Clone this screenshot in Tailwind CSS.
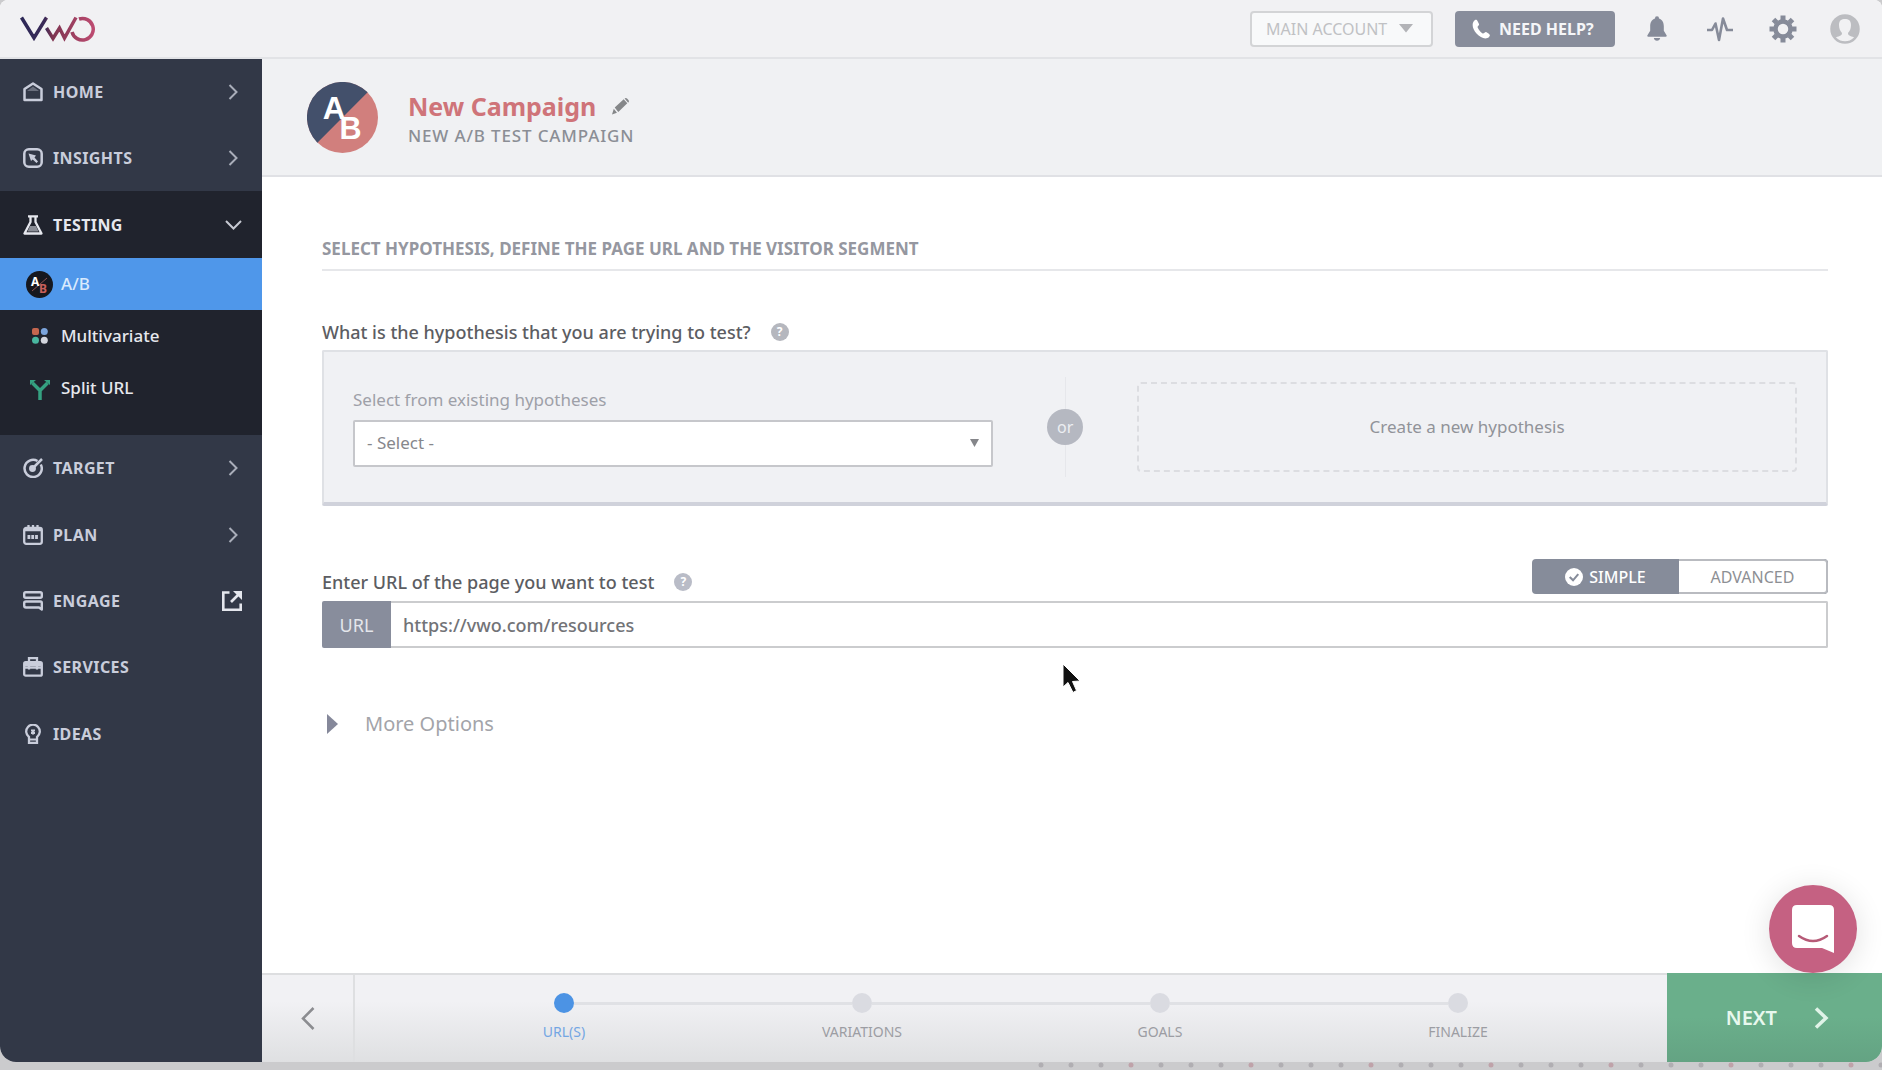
<!DOCTYPE html>
<html lang="en">
<head>
<meta charset="utf-8">
<meta name="viewport" content="width=device-width, initial-scale=1">
<title>New Campaign - VWO</title>
<script src="https://cdn.jsdelivr.net/npm/@tailwindcss/browser@4"></script>
</head>
<body class="flex min-h-screen flex-col bg-[#cbcbcd] font-['Noto_Sans',sans-serif] text-base text-[#5c5d62]">
<div class="flex grow flex-col overflow-hidden rounded-t-lg rounded-b-2xl bg-white">

  <header class="flex h-[59px] shrink-0 items-center border-b-2 border-[#e2e3e6] bg-[#f1f1f3] pr-3 pl-5">
    <a href="#" aria-label="VWO" class="mr-auto">
      <svg width="76" height="26" viewBox="0 0 76 26" fill="none" stroke-width="3.500">
        <defs>
          <linearGradient id="brand" gradientUnits="userSpaceOnUse" x1="0" y1="0" x2="76" y2="0"><stop offset="0" stop-color="#2b2856"/><stop offset=".33" stop-color="#3a2a58"/><stop offset=".42" stop-color="#7d3450"/><stop offset="1" stop-color="#c04c72"/></linearGradient>
        </defs>
        <path d="M1.500 1.500L14 22L26.500 1.500M26.500 12L33 22.500L39.500 12L44.500 22L56 1.500M59 3A10.800 10.800 0 1 1 52 16" stroke="url(#brand)"/>
      </svg>
    </a>
    <button class="flex h-9 w-[183px] items-center rounded-sm border-2 border-[#d3d4d6] bg-[#f8f9fa] pl-[14px] text-base text-[#c0c1c4]">MAIN ACCOUNT
      <svg class="ml-3" width="14" height="9" viewBox="0 0 14 9" fill="#b2b3b7"><path d="M0 0H14L7 8.500Z"/></svg>
    </button>
    <button class="ml-[22px] flex h-9 w-[160px] items-center rounded-sm bg-[#888d9b] pl-[17px] text-base font-bold text-[#f5f6f8]">
      <svg class="mr-2" width="19" height="20" viewBox="0 0 19 20" fill="#fff"><path d="M3 1C-1 4 .5 10 4.500 14.500C8.500 19 14 21 17 18C18.500 16.500 18 15.500 16.500 14.500L14.500 13.200C13 12.500 12.500 14.500 11 14.500C9 14 6 10 5.500 8C5.500 7 7.500 6.500 7 5L5.500 2C5 .8 4 .3 3 1Z"/></svg>NEED HELP?
    </button>
    <button aria-label="Notifications" class="ml-8">
      <svg width="20" height="28" viewBox="0 0 22 28" fill="#868b99"><path d="M11 0a2.200 2.200 0 0 1 2.200 2.400C17 3.500 18.500 7 18.500 11v5l3 5c.5 1 .2 1.600-1 1.600h-19C.3 22.600 0 22 .5 21l3-5v-5c0-4 1.500-7.500 5.300-8.600A2.200 2.200 0 0 1 11 0ZM7.500 24h7c-.5 2-1.500 3-3.500 3s-3-1-3.500-3Z"/></svg>
    </button>
    <button aria-label="Activity" class="ml-10">
      <svg width="26" height="26" viewBox="0 0 26 26" fill="none" stroke="#868b99" stroke-width="2.600" stroke-linejoin="round"><path d="M0 14H5L8.500 7.500L12 24L16 2.500L20 14H26"/></svg>
    </button>
    <button aria-label="Settings" class="ml-9">
      <svg width="28" height="28" viewBox="-14 -14 28 28" fill="none" stroke="#868b99"><circle r="7.500" stroke-width="4.500"/><path stroke-width="5" d="M0-9V-13.500M0 9V13.500M-9 0H-13.500M9 0H13.500M6.500 6.500L9.500 9.500M-6.500-6.500L-9.500-9.500M-6.500 6.500L-9.500 9.500M6.500-6.500L9.500-9.500"/></svg>
    </button>
    <button aria-label="Profile" class="ml-[33px] mr-2.5">
      <svg width="30" height="30" viewBox="0 0 30 30"><circle cx="15" cy="15" r="13.500" fill="#f1f1f3" stroke="#bcbdc1" stroke-width="2.500"/><path fill="#bcbdc1" fill-rule="evenodd" d="M15 2A13 13 0 0 0 5 24C8 22 12 22.500 12 19C10 17 9 14 9 11C9 6.500 11.500 5 15 5S21 6.500 21 11C21 14 20 17 18 19C18 22.500 22 22 25 24A13 13 0 0 0 15 2Z"/></svg>
    </button>
  </header>

  <div class="flex grow">
    <nav class="w-[262px] shrink-0 bg-[#323847] text-base font-bold tracking-wide text-[#c9cddb]">
      <a href="#" class="flex h-[66px] items-center gap-2.5 pr-6 pl-[23px]">
        <svg width="20" height="20" viewBox="0 0 20 20" fill="none" stroke="currentColor" stroke-width="2.500" stroke-linejoin="round"><path fill="#6a6f7d" stroke="none" d="M4 9L10 4.500L16 9Z"/><path d="M1.500 7L10 1.500L18.500 7V18H1.500Z"/></svg>HOME
        <svg class="ml-auto" width="10" height="16" viewBox="0 0 10 16" fill="none" stroke="#a9adb9" stroke-width="2"><path d="M1.500 1L8.500 8L1.500 15"/></svg>
      </a>
      <a href="#" class="flex h-[66px] items-center gap-2.5 pr-6 pl-[23px]">
        <svg width="20" height="20" viewBox="0 0 20 20" fill="none" stroke="currentColor" stroke-width="2.500"><rect x="1.300" y="1.300" width="17.400" height="17.400" rx="4.500"/><path fill="currentColor" stroke="none" d="M5.500 5.500L13 7.500L11.500 9.500L15 13.500L13.500 15L9.700 11.500L8 13Z"/></svg>INSIGHTS
        <svg class="ml-auto" width="10" height="16" viewBox="0 0 10 16" fill="none" stroke="#a9adb9" stroke-width="2"><path d="M1.500 1L8.500 8L1.500 15"/></svg>
      </a>
      <div class="bg-[#20232d] pb-[22px] text-[#e6e8ee]">
        <a href="#" class="flex h-[67px] items-center gap-2.5 pr-5 pl-[23px]">
          <svg width="20" height="20" viewBox="0 0 20 20" fill="none" stroke="currentColor" stroke-width="2.300" stroke-linejoin="round"><path d="M5 1.300H15M7.500 1.500V7L1.500 18.500H18.500L12.500 7V1.500"/><path fill="#8a8d96" stroke="none" d="M7 11H13L15.500 16.500H4.500Z"/></svg>TESTING
          <svg class="ml-auto" width="17" height="10" viewBox="0 0 17 10" fill="none" stroke="#c6c9d2" stroke-width="2"><path d="M1 1L8.500 8.500L16 1"/></svg>
        </a>
        <div class="text-[17px] font-medium tracking-normal">
          <a href="#" class="flex h-[52px] items-center bg-[#4f97ea] pl-[26px] text-[#d9eafd]">
            <svg class="mr-2" width="27" height="27" viewBox="0 0 27 27"><circle cx="13.500" cy="13.500" r="13.500" fill="#16181f"/><path d="M6 20L21 7" stroke="#8d5352"/><text x="5" y="15" font-size="12" font-weight="700" fill="#fff">A</text><text x="13" y="22" font-size="12" font-weight="700" fill="#c9605c">B</text></svg>A/B
          </a>
          <a href="#" class="flex h-[52px] items-center pl-8">
            <svg class="mr-[13px]" width="16" height="16" viewBox="0 0 16 16"><rect width="7" height="7" rx="2" fill="#c4664f"/><circle cx="12.300" cy="3.500" r="3.500" fill="#7ba4dc"/><circle cx="3.500" cy="12.300" r="3.500" fill="#49b7a0"/><circle cx="12.300" cy="12.300" r="3.500" fill="#d3d5dd"/></svg>Multivariate
          </a>
          <a href="#" class="flex h-[51px] items-center pl-[30px]">
            <svg class="mt-1 mr-[11px]" width="20" height="20" viewBox="0 0 20 20" fill="none" stroke="#35a181" stroke-width="3.500"><path d="M2.500 3L10 10.500L17.500 3M10 10V20"/><path fill="#35a181" stroke="none" d="M0 0H6L0 5ZM20 0H14L20 5Z"/></svg>Split URL
          </a>
        </div>
      </div>
      <a href="#" class="flex h-[66px] items-center gap-2.5 pr-6 pl-[23px]">
        <svg width="20" height="20" viewBox="0 0 20 20" fill="none" stroke="currentColor" stroke-width="2.500"><path d="M14.500 3A8.600 8.600 0 1 0 17.800 6.500"/><circle cx="9.500" cy="10.500" r="2.200" fill="currentColor"/><path d="M10 10L19 1"/></svg>TARGET
        <svg class="ml-auto" width="10" height="16" viewBox="0 0 10 16" fill="none" stroke="#a9adb9" stroke-width="2"><path d="M1.500 1L8.500 8L1.500 15"/></svg>
      </a>
      <a href="#" class="flex h-[67px] items-center gap-2.5 pr-6 pl-[23px]">
        <svg width="20" height="20" viewBox="0 0 20 20" fill="none" stroke="currentColor" stroke-width="2.300"><rect x="1.200" y="3" width="17.600" height="15.800" rx="2"/><path d="M1 5H19M5.500 0V5M10 0V5M14.500 0V5"/><path stroke-width="4" stroke-dasharray="2.800 1" d="M4.500 12H15.500"/></svg>PLAN
        <svg class="ml-auto" width="10" height="16" viewBox="0 0 10 16" fill="none" stroke="#a9adb9" stroke-width="2"><path d="M1.500 1L8.500 8L1.500 15"/></svg>
      </a>
      <a href="#" class="flex h-[66px] items-center gap-2.5 pr-5 pl-[23px]">
        <svg width="20" height="20" viewBox="0 0 20 20" fill="none" stroke="currentColor" stroke-width="2.400" stroke-linejoin="round"><rect x="1.200" y="1.200" width="17.600" height="5.500" rx="1.500"/><path d="M3 10.500H17.500Q18.800 10.500 18.800 12V18.500L16 16.500H3Q1.200 16.500 1.200 14.500V12Q1.200 10.500 3 10.500Z"/></svg>ENGAGE
        <svg class="ml-auto" width="20" height="20" viewBox="0 0 20 20" fill="none" stroke="#e4e6ed" stroke-width="2.600"><path d="M7.500 1.500H1.300V18.700H18.700V12.500"/><path d="M9 11L16 4"/><path fill="#e4e6ed" stroke="none" d="M11 0H20V9Z"/></svg>
      </a>
      <a href="#" class="flex h-[66px] items-center gap-2.5 pr-6 pl-[23px]">
        <svg width="20" height="20" viewBox="0 0 20 20" fill="none" stroke="currentColor" stroke-width="2.300"><rect x="1.200" y="5.200" width="17.600" height="13.500" rx="1.500"/><path d="M6 5V1.200H14V5M1 10.500H19"/><path stroke-width="3" d="M1.500 7.500H18.500"/><path d="M6 8V12.500M14 8V12.500"/></svg>SERVICES
      </a>
      <a href="#" class="flex h-[67px] items-center gap-2.5 pr-6 pl-[23px]">
        <svg width="20" height="20" viewBox="0 0 20 20" fill="none" stroke="currentColor" stroke-width="2.300"><path d="M6 13A6.800 6.800 0 1 1 14 13V19H6Z"/><path stroke-width="2" d="M6.500 15.500H13.500M10 10.500V6M8 6.500H12M8 9H12"/></svg>IDEAS
      </a>
    </nav>

    <div class="flex min-w-0 grow flex-col">
      <section class="flex h-[118px] items-center border-b-2 border-[#e0e1e5] bg-[#f0f1f3] pl-[45px]">
        <svg width="71" height="71" viewBox="0 0 72 72" font-family="Liberation Sans, sans-serif" font-weight="700" fill="#fff"><circle cx="36" cy="36" r="36" fill="#d17f7d"/><path fill="#43506b" d="M61.500 10.500A36 36 0 1 0 10.500 61.500Z"/><text x="16" y="38" font-size="32">A</text><text x="33" y="58" font-size="31">B</text></svg>
        <div class="ml-[30px] pt-1">
          <div class="flex items-center gap-4">
            <h1 class="text-[25px] leading-8 font-bold text-[#cf7479]">New Campaign</h1>
            <button aria-label="Rename campaign">
              <svg width="18" height="19" viewBox="0 0 20 20" fill="#858789"><path d="M0 19L2 12.500L5.500 17ZM3 11L13 2L17 6.500L7 16ZM14 1.200Q15.500 0 17 1.500L18.500 3Q19.500 4.500 18 5.700Z"/></svg>
            </button>
          </div>
          <p class="mt-0.5 text-[17px] leading-6 font-medium tracking-wider text-[#8b8e95]">NEW A/B TEST CAMPAIGN</p>
        </div>
      </section>

      <main class="grow pt-[60px] pr-[54px] pl-[60px]">
        <h2 class="border-b-2 border-[#e6e7ea] pb-2 text-[17px] leading-6 font-bold text-[#9597a0]">SELECT HYPOTHESIS, DEFINE THE PAGE URL AND THE VISITOR SEGMENT</h2>

        <div class="mt-[49px] flex items-center gap-5">
          <h3 class="text-lg leading-6 font-medium">What is the hypothesis that you are trying to test?</h3>
          <button aria-label="Help on hypotheses" class="size-[18px] rounded-full bg-[#b5b7be] text-xs leading-[18px] font-bold text-white">?</button>
        </div>
        <div class="mt-1.5 flex h-[156px] items-center rounded-xs border-2 border-b-4 border-[#dfe1e5] border-b-[#d0d2db] bg-[#f0f1f4] px-[29px]">
          <div class="w-0 grow-[41]">
            <label for="hypothesis" class="block text-[17px] leading-6 text-[#9ea0a8]">Select from existing hypotheses</label>
            <div class="mt-2 grid items-center">
              <select id="hypothesis" class="col-start-1 row-start-1 h-[47px] w-full appearance-none rounded-xs border-2 border-[#c6c7cb] bg-white px-3 text-[17px] text-[#86878c]"><option>- Select -</option></select>
              <svg class="col-start-1 row-start-1 mr-[14px] justify-self-end" width="9" height="8" viewBox="0 0 9 8" fill="#85868a"><path d="M0 0H9L4.500 8Z"/></svg>
            </div>
          </div>
          <div class="flex w-36 shrink-0 flex-col items-center">
            <span class="h-8 w-px bg-[#e6e7eb]"></span>
            <span class="size-9 rounded-full bg-[#b5b8c1] text-center text-base leading-9 text-[#eceef2]">or</span>
            <span class="h-8 w-px bg-[#e6e7eb]"></span>
          </div>
          <button class="h-[90px] w-0 grow-[42] rounded-sm border-2 border-dashed border-[#dcdde1] text-[17px] text-[#919399]">Create a new hypothesis</button>
        </div>

        <div class="mt-[53px] flex items-start gap-5">
          <label for="page-url" class="mt-[11px] text-lg leading-6 font-medium">Enter URL of the page you want to test</label>
          <button aria-label="Help on page URL" class="mt-[14px] size-[18px] rounded-full bg-[#b9bcc7] text-xs leading-[18px] font-bold text-white">?</button>
          <div role="radiogroup" aria-label="URL mode" class="relative ml-auto flex h-[35px] w-[296px] overflow-hidden rounded-sm bg-[#868c9a] text-base">
            <label class="flex flex-1 items-center justify-center gap-1.5 font-medium text-white">
              <input type="radio" name="mode" checked class="sr-only">
              <svg width="18" height="18" viewBox="0 0 19 19" fill="none"><circle cx="9.500" cy="9.500" r="9.500" fill="#fff"/><path d="M5 9.500L8.500 13L14 6.500" stroke="#868c9a" stroke-width="2.200"/></svg>SIMPLE
            </label>
            <label class="flex flex-1 items-center justify-center rounded-r-sm border-2 border-l-0 border-[#b9bbc0] bg-white text-[#8d8f94]">
              <input type="radio" name="mode" class="sr-only">ADVANCED
            </label>
          </div>
        </div>
        <div class="mt-[7px] flex h-[47px]">
          <span class="flex w-[69px] shrink-0 items-center justify-center rounded-l-xs bg-[#888d9c] text-lg text-[#e4e6eb]">URL</span>
          <input id="page-url" type="text" value="https://vwo.com/resources" class="min-w-0 grow rounded-r-xs border-2 border-l-0 border-[#cbccce] bg-white px-3 text-lg font-medium text-[#727377]">
        </div>

        <button class="mt-16 flex items-center pl-[5px] text-xl leading-6 text-[#a3a4a9]">
          <svg class="mr-[27px]" width="11" height="20" viewBox="0 0 11 20" fill="#85889a"><path d="M0 0L11 10L0 20Z"/></svg>More Options
        </button>
      </main>

      <footer class="flex h-[89px] items-stretch border-t-2 border-[#dddee0] bg-linear-to-b from-[#f1f1f4] from-30% to-[#dfe0e2]">
        <button aria-label="Back" class="flex w-[93px] shrink-0 items-center justify-center border-r-2 border-[#dedfe1]">
          <svg width="14" height="23" viewBox="0 0 14 23" fill="none" stroke="#8b8c90" stroke-width="2.500"><path d="M12.500 1L2 11.500L12.500 22"/></svg>
        </button>
        <ol class="grid grow grid-cols-4 px-15 pt-[18px] text-center text-sm leading-5 text-[#9c9da3]">
          <li><div class="flex items-center"><i class="grow"></i><i class="size-5 rounded-full bg-[#4c93e4]"></i><i class="h-[3px] grow bg-[#e0e1e5]"></i></div><p class="mt-[9px] text-[#74a6e3]">URL(S)</p></li>
          <li><div class="flex items-center"><i class="h-[3px] grow bg-[#e0e1e5]"></i><i class="size-5 rounded-full bg-[#dadbe1]"></i><i class="h-[3px] grow bg-[#e0e1e5]"></i></div><p class="mt-[9px]">VARIATIONS</p></li>
          <li><div class="flex items-center"><i class="h-[3px] grow bg-[#e0e1e5]"></i><i class="size-5 rounded-full bg-[#dadbe1]"></i><i class="h-[3px] grow bg-[#e0e1e5]"></i></div><p class="mt-[9px]">GOALS</p></li>
          <li><div class="flex items-center"><i class="h-[3px] grow bg-[#e0e1e5]"></i><i class="size-5 rounded-full bg-[#dadbe1]"></i><i class="grow"></i></div><p class="mt-[9px]">FINALIZE</p></li>
        </ol>
        <button class="-mt-0.5 flex w-[215px] shrink-0 items-center justify-end bg-linear-to-b from-[#6aaf8b] from-50% to-[#64a383] pr-[53px] text-xl font-semibold text-[#e8f8ee]">NEXT
          <svg class="ml-[37px]" width="15" height="22" viewBox="0 0 15 22" fill="none" stroke="#e0f3e8" stroke-width="3.500"><path d="M2 1.500L12 11L2 20.500"/></svg>
        </button>
      </footer>
    </div>
  </div>
</div>

<!-- Page backdrop below the window -->
<div class="flex h-2 shrink-0 justify-end">
  <svg class="h-2 w-[850px]" aria-hidden="true"><defs><pattern id="dots" width="120" height="8" patternUnits="userSpaceOnUse"><circle cx="9" cy="3" r="2.500" fill="#b0aeb2"/><circle cx="39" cy="3" r="2.500" fill="#b0aeb2"/><circle cx="69" cy="3" r="2.500" fill="#b0aeb2"/><circle cx="99" cy="3" r="2.500" fill="#bfa2a9"/></pattern></defs><rect width="850" height="8" fill="url(#dots)"/></svg>
</div>

<button aria-label="Open chat" class="fixed right-[25px] bottom-[97px] flex size-[88px] items-center justify-center rounded-full bg-[#c56182] shadow-[0_4px_30px_rgba(0,0,0,0.12)]">
  <svg width="42" height="48" viewBox="0 0 42 48"><path fill="#fff" d="M5 0H37Q42 0 42 5V48L30 43H5Q0 43 0 38V5Q0 0 5 0Z"/><path d="M7 31Q21 41 35 31" fill="none" stroke="#b65a77" stroke-width="2.500" stroke-linecap="round"/></svg>
</button>

<!-- Mouse pointer -->
<svg class="pointer-events-none absolute top-[663px] left-[1061px]" width="20" height="31" viewBox="0 0 20 31"><path d="M2 1L2 24L7 19.500L12 29.500L15.500 27.500L11.500 18.500L19 18Z" fill="#111" stroke="#fff" stroke-width="1"/></svg>
</body>
</html>
